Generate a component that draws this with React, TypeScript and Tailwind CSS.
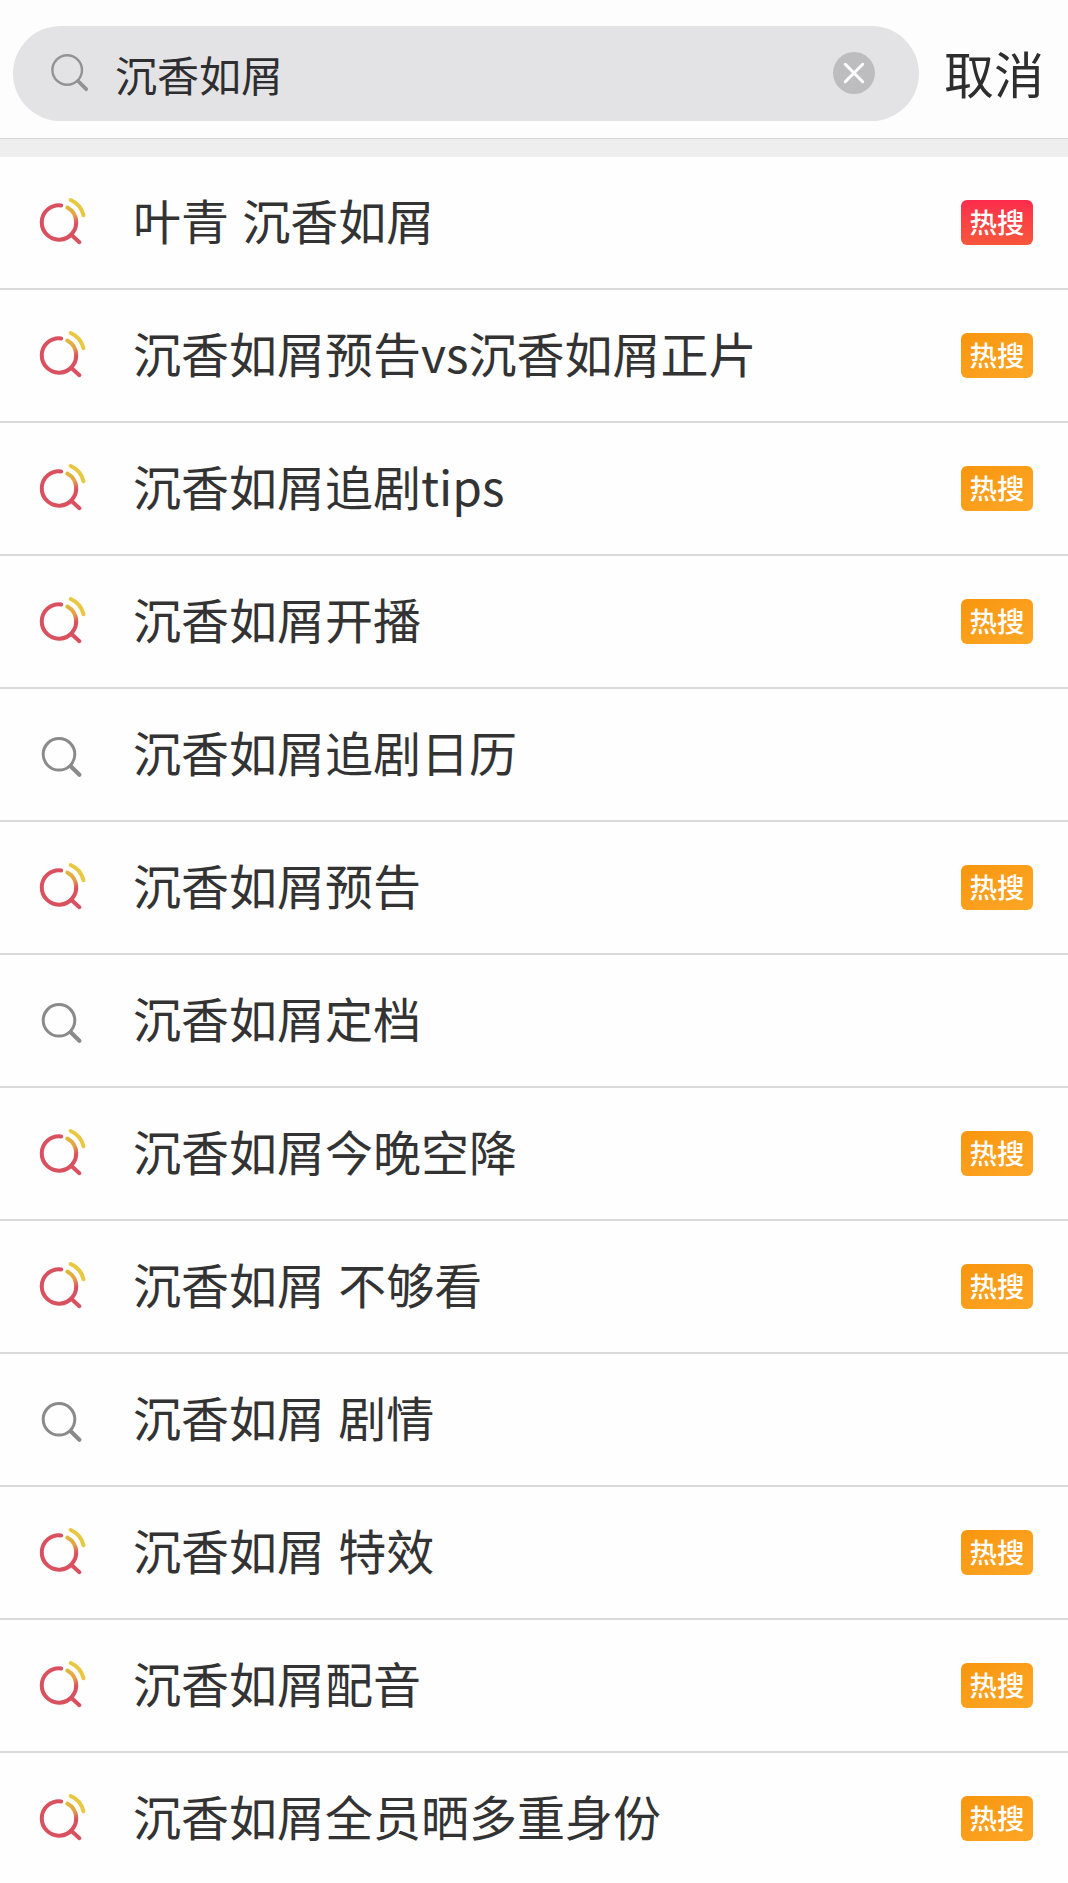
type Heat = 'red' | 'orange'

interface Suggestion {
  text: string
  heat?: Heat
}

const suggestions: Suggestion[] = [
  { text: '叶青 沉香如屑', heat: 'red' },
  { text: '沉香如屑预告vs沉香如屑正片', heat: 'orange' },
  { text: '沉香如屑追剧tips', heat: 'orange' },
  { text: '沉香如屑开播', heat: 'orange' },
  { text: '沉香如屑追剧日历' },
  { text: '沉香如屑预告', heat: 'orange' },
  { text: '沉香如屑定档' },
  { text: '沉香如屑今晚空降', heat: 'orange' },
  { text: '沉香如屑 不够看', heat: 'orange' },
  { text: '沉香如屑 剧情' },
  { text: '沉香如屑 特效', heat: 'orange' },
  { text: '沉香如屑配音', heat: 'orange' },
  { text: '沉香如屑全员晒多重身份', heat: 'orange' },
]

const badgeColors: Record<Heat, string> = {
  red: 'bg-linear-to-b from-[#fb2a4c] to-[#f8553a]',
  orange: 'bg-linear-to-br from-[#f8960c] to-[#fda726]',
}

function HotIcon() {
  return (
    <svg className="w-16 h-[65px] shrink-0" viewBox="0 0 64 65" fill="none" strokeWidth="4" strokeLinecap="round">
      <defs>
        <linearGradient id="inner" gradientUnits="userSpaceOnUse" x1="40" y1="17" x2="49" y2="33">
          <stop offset="0" stopColor="#dfb83c" />
          <stop offset="0.55" stopColor="#e5a045" />
          <stop offset="1" stopColor="#d9505f" />
        </linearGradient>
      </defs>
      <path d="M33.2 15.4A17.2 17.2 0 1 0 48 30" stroke="#d9505f" />
      <path d="M39.3 17.6A17.2 17.2 0 0 1 48.2 32" stroke="url(#inner)" />
      <path d="M43.5 45L51.4 52.2" stroke="#d9505f" />
      <path d="M42.7 10C49.5 13 53.8 18.2 55.5 25.2" stroke="#e8c840" />
    </svg>
  )
}

function SearchIcon() {
  return (
    <svg className="w-16 h-[65px] shrink-0" viewBox="0 0 64 65" fill="none" stroke="#8a8a8a" strokeLinecap="round">
      <circle cx="31" cy="32.3" r="15.8" strokeWidth="3" />
      <path d="M43 44.5L51.4 52.8" strokeWidth="4.2" />
    </svg>
  )
}

function SearchBar() {
  return (
    <header className="flex items-center h-[139px] pt-2 pl-[13px] bg-[#fdfdfd] border-b border-[#d8d8d8]">
      <div className="flex items-center w-[906px] h-[95px] rounded-full bg-[#e3e3e5] pl-[35px] pr-11">
        <svg className="w-11 h-11 shrink-0" viewBox="0 0 44 44" fill="none" stroke="#929294" strokeLinecap="round">
          <circle cx="19.2" cy="19" r="14.8" strokeWidth="2.4" />
          <path d="M30.5 30.5L38.2 38.2" strokeWidth="3.8" />
        </svg>
        <span className="ml-[23px] pt-px text-[42px] leading-none text-[#2e2e30]">沉香如屑</span>
        <svg className="ml-auto w-[42px] h-[42px]" viewBox="0 0 42 42" fill="none">
          <circle cx="21" cy="21" r="21" fill="#bdbdbf" />
          <path d="M12.3 12.3L29.7 29.7M29.7 12.3L12.3 29.7" stroke="#fff" strokeWidth="3" strokeLinecap="round" />
        </svg>
      </div>
      <span className="ml-[25px] pb-0.5 text-[50px] leading-none text-[#2e2e2e]">取消</span>
    </header>
  )
}

export default function App() {
  return (
    <div className="w-full h-[1883px] overflow-hidden bg-[#fefefe] font-['Noto_Sans_CJK_SC',sans-serif]" lang="zh-CN">
      <SearchBar />
      <div className="h-[18px] bg-[#eeeeee]" />
      <ul>
        {suggestions.map(({ text, heat }) => (
          <li key={text} className="flex items-center h-[133px] pl-7 pr-[35px] border-b-2 border-[#d9d9d9]">
            {heat ? <HotIcon /> : <SearchIcon />}
            <span className="ml-[41px] pb-[7px] text-[48px] leading-none whitespace-nowrap text-[#333333] [word-spacing:2.5px]">
              {text}
            </span>
            {heat && (
              <span
                className={`ml-auto flex items-center justify-center w-[72px] h-[45px] pb-0.5 rounded-[6px] text-[27.5px] font-medium leading-none text-white ${badgeColors[heat]}`}
              >
                热搜
              </span>
            )}
          </li>
        ))}
      </ul>
    </div>
  )
}
